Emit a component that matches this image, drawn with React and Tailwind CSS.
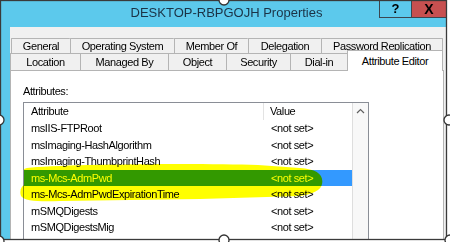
import React from "react";

const topTabs = [
  { label: "General", w: "w-[59px]" },
  { label: "Operating System", w: "w-[104px]" },
  { label: "Member Of", w: "w-[74px]" },
  { label: "Delegation", w: "w-[73px]" },
  { label: "Password Replication", w: "w-[122px]" },
];

const bottomTabs = [
  { label: "Location", w: "w-[70px]" },
  { label: "Managed By", w: "w-[88px]" },
  { label: "Object", w: "w-[58px]" },
  { label: "Security", w: "w-[64px]" },
  { label: "Dial-in", w: "w-[57px]" },
];

const rows = [
  { name: "msIIS-FTPRoot" },
  { name: "msImaging-HashAlgorithm" },
  { name: "msImaging-ThumbprintHash" },
  { name: "ms-Mcs-AdmPwd", selected: true },
  { name: "ms-Mcs-AdmPwdExpirationTime" },
  { name: "mSMQDigests" },
  { name: "mSMQDigestsMig" },
  { name: "mSMQSignCertificates" },
];

const font = "font-['Liberation_Sans',Arial,sans-serif]";

const App = () => {
  return (
    <div className={`relative w-[450px] h-[242px] bg-white overflow-hidden ${font}`}>
      <div className="w-[447px] h-[240px] bg-[#5cc9ec] flex flex-col overflow-hidden">
        {/* title bar */}
        <div className="relative h-[27px] shrink-0">
          <div className="text-center text-[13px] leading-[26px] text-[#1b3346] pl-[6px]">
            DESKTOP-RBPGOJH Properties
          </div>
          <div className="absolute right-0 top-0 flex h-[18px]">
            <div className="w-[33px] h-full bg-[#5cc9ec] border border-t-0 border-[#3c4650] flex items-center justify-center text-[13px] font-bold text-black leading-none">
              ?
            </div>
            <div className="w-[35px] h-full bg-[#c75050] border-b border-r border-[#3c4650] flex items-center justify-center text-[14px] font-bold text-black leading-none">
              X
            </div>
          </div>
        </div>

        {/* body */}
        <div className="flex flex-1 min-h-0">
          <div className="w-[10px] shrink-0" />
          <div className="flex-1 bg-[#f0f0f0] pt-[11px] flex flex-col min-h-0">
            {/* tab row 1 */}
            <div className="flex h-[15px] ml-[1px] shrink-0">
              {topTabs.map((t, i) => (
                <div
                  key={t.label}
                  className={`${t.w} h-full border-t border-l border-[#b4b4b4] ${
                    i === topTabs.length - 1 ? "border-r" : ""
                  } rounded-t-[1px] flex items-center justify-center text-[11px] tracking-[-0.4px] text-black leading-none`}
                >
                  {t.label}
                </div>
              ))}
            </div>
            {/* tab row 2 */}
            <div className="flex h-[17px] shrink-0 items-end">
              {bottomTabs.map((t) => (
                <div
                  key={t.label}
                  className={`${t.w} h-[17px] border-t border-l border-[#b4b4b4] flex items-center justify-center text-[11px] tracking-[-0.4px] text-black leading-none`}
                >
                  {t.label}
                </div>
              ))}
              <div className="relative z-10 w-[96px] h-[21px] -mb-[1px] bg-white border-t border-l border-r border-[#b4b4b4] flex items-start pt-[5px] justify-center text-[11px] tracking-[-0.4px] text-black leading-none">
                Attribute Editor
              </div>
            </div>
            {/* panel */}
            <div className="w-[434px] flex-1 min-h-0 bg-white border border-[#b4b4b4] pl-[12px] pt-[14px] flex flex-col">
              <div className="text-[11px] tracking-[-0.4px] leading-[12px] text-black">Attributes:</div>
              <div className="mt-[5px] w-[346px] flex-1 border border-[#8a8e96] flex">
                <div className="w-[328px] flex flex-col">
                  <div className="h-[17px] flex shrink-0 text-[11px] tracking-[-0.4px] text-black">
                    <div className="w-[240px] border-r border-[#e3e3e3] pl-[7px] flex items-center">Attribute</div>
                    <div className="flex-1 pl-[6px] flex items-center">Value</div>
                  </div>
                  {rows.map((r) => (
                    <div
                      key={r.name}
                      className={`h-[16.5px] shrink-0 flex text-[11px] tracking-[-0.4px] ${
                        r.selected ? "bg-[#3399ff] text-white" : "text-black"
                      }`}
                    >
                      <div className="w-[240px] pl-[7px] flex items-center whitespace-nowrap">{r.name}</div>
                      <div className="flex-1 pl-[7px] flex items-center whitespace-nowrap">&lt;not set&gt;</div>
                    </div>
                  ))}
                </div>
                <div className="w-[16px] bg-[#f8f8f8] border-l border-[#dedede] flex flex-col items-center pt-[5px]">
                  <svg width="9" height="6" viewBox="0 0 9 6">
                    <path d="M1 5 L4.5 1.5 L8 5" fill="none" stroke="#606060" strokeWidth="1.2" />
                  </svg>
                </div>
              </div>
            </div>
          </div>
        </div>
      </div>

      {/* highlighter marker */}
      <svg
        className="absolute left-0 top-0 mix-blend-multiply pointer-events-none"
        width="450"
        height="242"
        viewBox="0 0 450 242"
      >
        <path
          d="M27 168 C60 164 200 163 258 165 L300 168 C317 169 324 175 322 184 C321 190 313 194 300 196 L200 199 L60 201 C40 202 24 201 21 196 C19 190 22 186 24 185 L24 169 Z"
          fill="#ffff00"
        />
      </svg>

      {/* selection frame and handles */}
      <svg className="absolute left-0 top-0 pointer-events-none" width="450" height="242" viewBox="0 0 450 242">
        <rect x="0.5" y="0.5" width="446" height="239" fill="none" stroke="#3a3a3a" strokeWidth="1.3" />
        {[
          [224, 0],
          [-1, 120],
          [449, 120],
          [-1, 241],
          [224, 240],
          [450, 240],
        ].map(([cx, cy], i) => (
          <circle key={i} cx={cx} cy={cy} r="5" fill="white" stroke="#333" strokeWidth="1.3" />
        ))}
      </svg>
    </div>
  );
};

export default App;
